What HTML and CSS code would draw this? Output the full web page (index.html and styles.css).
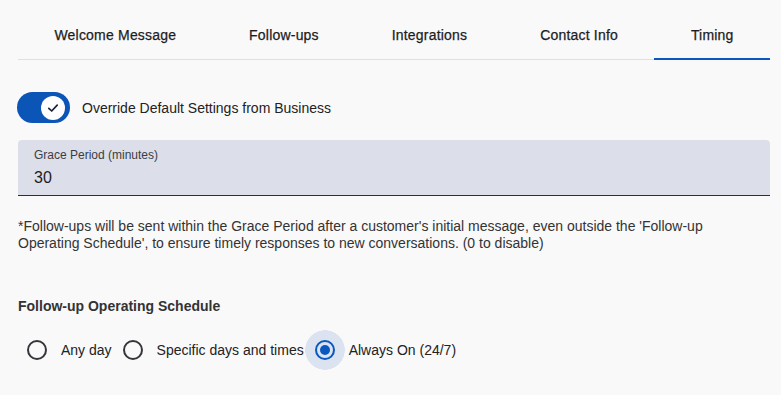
FILE: index.html
```html
<!DOCTYPE html>
<html lang="en">
<head>
<meta charset="utf-8">
<title>Timing</title>
<link rel="stylesheet" href="styles.css">
</head>
<body>
<div class="page">
  <nav class="tabs">
    <div class="tab">Welcome Message</div>
    <div class="tab">Follow-ups</div>
    <div class="tab">Integrations</div>
    <div class="tab">Contact Info</div>
    <div class="tab active">Timing</div>
  </nav>

  <div class="switch-row">
    <span class="switch">
      <span class="knob">
        <svg width="14" height="14" viewBox="0 0 14 14"><path d="M2.8 7.3 L5.7 10 L11.2 4.2" fill="none" stroke="#1b2233" stroke-width="1.7" stroke-linecap="round" stroke-linejoin="round"/></svg>
      </span>
    </span>
    <span class="switch-label">Override Default Settings from Business</span>
  </div>

  <div class="field">
    <span class="field-label">Grace Period (minutes)</span>
    <span class="field-value">30</span>
  </div>

  <p class="helper">*Follow-ups will be sent within the Grace Period after a customer's initial message, even outside the 'Follow-up Operating Schedule', to ensure timely responses to new conversations. (0 to disable)</p>

  <h3 class="section-title">Follow-up Operating Schedule</h3>

  <div class="radios">
    <label class="radio-item"><span class="radio"><span class="ring"></span></span><span class="radio-label">Any day</span></label>
    <label class="radio-item"><span class="radio"><span class="ring"></span></span><span class="radio-label">Specific days and times</span></label>
    <label class="radio-item"><span class="radio checked"><span class="ring"><span class="dot"></span></span></span><span class="radio-label">Always On (24/7)</span></label>
  </div>
</div>
</body>
</html>
```

FILE: styles.css
```css
* { box-sizing: border-box; }
html, body {
  margin: 0;
  padding: 0;
  background: #f9f9fa;
  font-family: "Liberation Sans", Arial, sans-serif;
  color: #222;
}
.page {
  padding: 11px 11px 0 18px;
}
.tabs {
  display: flex;
  border-bottom: 1px solid #dfe0e7;
  height: 49px;
}
.tab {
  flex: 1 1 auto;
  height: 48px;
  display: flex;
  align-items: center;
  justify-content: center;
  font-size: 14px;
  letter-spacing: 0.2px;
  color: #1d1d1f;
  -webkit-text-stroke: 0.25px #1d1d1f;
  position: relative;
  white-space: nowrap;
}
.tab.active::after {
  content: "";
  position: absolute;
  left: 0;
  right: 0;
  bottom: -1px;
  height: 2px;
  background: #0a57c0;
}
.switch-row {
  display: flex;
  align-items: center;
  margin-top: 32px;
  height: 31px;
}
.switch {
  width: 53px;
  height: 31px;
  border-radius: 16px;
  background: #0b55b6;
  display: flex;
  align-items: center;
  justify-content: flex-end;
  padding-right: 5px;
  margin-left: -1px;
}
.knob {
  width: 24px;
  height: 24px;
  border-radius: 50%;
  background: #fff;
  display: flex;
  align-items: center;
  justify-content: center;
}
.switch-label {
  margin-left: 12px;
  font-size: 14px;
  color: #222;
}
.field {
  margin-top: 17px;
  height: 56px;
  background: #dcdee9;
  border-radius: 4px 4px 0 0;
  border-bottom: 1px solid #2e2f33;
  padding-left: 16px;
  display: flex;
  flex-direction: column;
}
.field-label {
  font-size: 12px;
  color: #3b3d44;
  margin-top: 8px;
  line-height: 14px;
}
.field-value {
  font-size: 16px;
  color: #1d1d1f;
  margin-top: 6px;
  line-height: 19px;
}
.helper {
  margin: 22px 0 0 0;
  padding-right: 16px;
  font-size: 14px;
  line-height: 17px;
  color: #333;
}
.section-title {
  margin: 46px 0 0 0;
  font-size: 14px;
  font-weight: 700;
  color: #333;
  line-height: 17px;
}
.radios {
  display: flex;
  align-items: center;
  margin-top: 14px;
  margin-left: -2px;
}
.radio-item {
  display: flex;
  align-items: center;
}
.radio {
  width: 42px;
  height: 42px;
  display: flex;
  align-items: center;
  justify-content: center;
  border-radius: 50%;
}
.radio.checked {
  background: radial-gradient(circle, #dae3ef 0 19.5px, transparent 20px);
}
.ring {
  width: 20px;
  height: 20px;
  border-radius: 50%;
  border: 2px solid #34363b;
  display: flex;
  align-items: center;
  justify-content: center;
}
.radio.checked .ring {
  border-color: #0a57c0;
}
.dot {
  width: 10px;
  height: 10px;
  border-radius: 50%;
  background: #0a57c0;
}
.radio-label {
  margin-left: 3px;
  font-size: 14px;
  color: #222;
  white-space: nowrap;
}
```
